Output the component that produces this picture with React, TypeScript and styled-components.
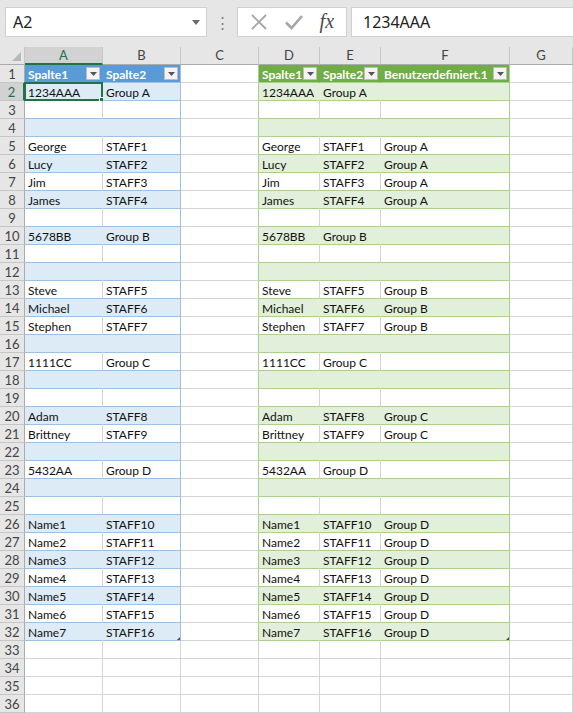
import React from "react";
import styled, { createGlobalStyle, css } from "styled-components";

const GlobalStyle = createGlobalStyle`
  html, body { margin: 0; padding: 0; background: #ffffff; }
  * { box-sizing: border-box; }
`;

const CELL_FONT = `"Lato", "Liberation Sans", sans-serif`;
const UI_FONT = `"Noto Sans", "Open Sans", "Liberation Sans", sans-serif`;

const BLUE = { head: "#5b9bd5", band: "#ddebf7", line: "#9bc2e6" };
const GREEN = { head: "#70ad47", band: "#e2efda", line: "#a9d08e" };
const GRID = "#d4d4d4";
const XL_GREEN = "#217346";

const Frame = styled.div`
  width: 573px;
  height: 713px;
  overflow: hidden;
  background: #e6e6e6;
  display: flex;
  flex-direction: column;
`;

const FormulaBar = styled.div`
  height: 47px;
  display: flex;
  align-items: flex-start;
  padding: 7px 0 0 5px;
  background: #e6e6e6;
`;

const NameBox = styled.div`
  width: 202px;
  height: 30px;
  background: #ffffff;
  border: 1px solid #d0d0d0;
  display: flex;
  align-items: center;
  justify-content: space-between;
  padding: 0 6px 0 7px;
  font-family: ${UI_FONT};
  font-size: 16px;
  color: #222;
`;

const Dots = styled.div`
  width: 30px;
  height: 30px;
  display: flex;
  align-items: center;
  justify-content: center;
  color: #7a7a7a;
  font-family: ${UI_FONT};
  font-size: 15px;
`;

const FxButtons = styled.div`
  width: 110px;
  height: 30px;
  background: #ffffff;
  border: 1px solid #d0d0d0;
  display: flex;
  align-items: center;
  justify-content: space-around;
  padding: 0 4px;
`;

const FxLabel = styled.span`
  font-family: "Liberation Serif", "DejaVu Serif", serif;
  font-style: italic;
  font-size: 20px;
  color: #4a4a4a;
  line-height: 1;
  padding-bottom: 2px;
`;

const FormulaInput = styled.div`
  flex: 1;
  height: 30px;
  margin-left: 4px;
  background: #ffffff;
  border: 1px solid #d0d0d0;
  border-right: none;
  display: flex;
  align-items: center;
  padding-left: 11px;
  font-family: ${UI_FONT};
  font-size: 16px;
  color: #222;
`;

const Sheet = styled.div`
  display: grid;
  grid-template-columns: 25px 78px 78px 78px 61px 61px 129px 63px;
  grid-auto-rows: 18px;
  background: #ffffff;
`;

const ColHead = styled.div<{ $sel?: boolean }>`
  background: ${(p) => (p.$sel ? "#d2d2d2" : "#e6e6e6")};
  border-right: 1px solid #c6c6c6;
  border-bottom: ${(p) => (p.$sel ? `2px solid ${XL_GREEN}` : "1px solid #ababab")};
  color: ${(p) => (p.$sel ? XL_GREEN : "#444")};
  font-family: ${CELL_FONT};
  font-size: 13px;
  display: flex;
  align-items: center;
  justify-content: center;
  line-height: 1;
  padding-top: ${(p) => (p.$sel ? "1px" : "0")};
`;

const Corner = styled.div`
  background: #e6e6e6;
  border-right: 1px solid #c6c6c6;
  border-bottom: 1px solid #ababab;
  display: flex;
  align-items: flex-end;
  justify-content: flex-end;
  padding: 0 3px 3px 0;
`;

const RowHead = styled.div<{ $sel?: boolean }>`
  background: ${(p) => (p.$sel ? "#d2d2d2" : "#e6e6e6")};
  border-right: ${(p) => (p.$sel ? `2px solid ${XL_GREEN}` : "1px solid #ababab")};
  border-bottom: 1px solid #c6c6c6;
  color: ${(p) => (p.$sel ? XL_GREEN : "#444")};
  font-family: ${CELL_FONT};
  font-size: 13px;
  display: flex;
  align-items: center;
  justify-content: center;
  padding-top: 1px;
`;

const Cell = styled.div<{
  $bg: string;
  $br: string;
  $bb: string;
  $head?: boolean;
  $corner?: boolean;
}>`
  position: relative;
  background: ${(p) => p.$bg};
  border-right: 1px solid ${(p) => p.$br};
  border-bottom: 1px solid ${(p) => p.$bb};
  font-family: ${CELL_FONT};
  font-size: 12px;
  color: ${(p) => (p.$head ? "#ffffff" : "#111111")};
  font-weight: ${(p) => (p.$head ? 700 : 400)};
  padding: 0 0 0 3px;
  display: flex;
  align-items: flex-end;
  line-height: 15px;
  white-space: nowrap;
  ${(p) =>
    p.$corner &&
    css`
      &::after {
        content: "";
        position: absolute;
        right: 0;
        bottom: 0;
        width: 0;
        height: 0;
        border-left: 3px solid transparent;
        border-bottom: 3px solid #4a4a4a;
      }
    `}
`;

const FilterButton = styled.span`
  position: absolute;
  right: 2px;
  top: 2px;
  width: 14px;
  height: 13px;
  background: #f3f3f3;
  border: 1px solid #bdbdbd;
  display: flex;
  align-items: center;
  justify-content: center;
`;

const Selection = styled.div`
  position: absolute;
  left: -1px;
  top: -1px;
  right: -1px;
  bottom: -1px;
  border: 2px solid ${XL_GREEN};
  pointer-events: none;
`;

const FillHandle = styled.div`
  position: absolute;
  right: -4px;
  bottom: -4px;
  width: 6px;
  height: 6px;
  background: ${XL_GREEN};
  border: 1px solid #ffffff;
`;

const Tri = () => (
  <svg width="7" height="4" viewBox="0 0 7 4">
    <polygon points="0,0 7,0 3.5,4" fill="#555" />
  </svg>
);

type Table = typeof BLUE;

const data: ([string, string, string] | null)[] = [
  ["1234AAA", "Group A", ""],
  null,
  null,
  ["George", "STAFF1", "Group A"],
  ["Lucy", "STAFF2", "Group A"],
  ["Jim", "STAFF3", "Group A"],
  ["James", "STAFF4", "Group A"],
  null,
  ["5678BB", "Group B", ""],
  null,
  null,
  ["Steve", "STAFF5", "Group B"],
  ["Michael", "STAFF6", "Group B"],
  ["Stephen", "STAFF7", "Group B"],
  null,
  ["1111CC", "Group C", ""],
  null,
  null,
  ["Adam", "STAFF8", "Group C"],
  ["Brittney", "STAFF9", "Group C"],
  null,
  ["5432AA", "Group D", ""],
  null,
  null,
  ["Name1", "STAFF10", "Group D"],
  ["Name2", "STAFF11", "Group D"],
  ["Name3", "STAFF12", "Group D"],
  ["Name4", "STAFF13", "Group D"],
  ["Name5", "STAFF14", "Group D"],
  ["Name6", "STAFF15", "Group D"],
  ["Name7", "STAFF16", "Group D"],
];
const leftRows = data.map((d) => (d ? [d[0], d[1]] : ["", ""]));
const rightRows = data.map((d) => (d ? [d[0], d[1], d[2]] : ["", "", ""]));

const COLS = ["A", "B", "C", "D", "E", "F", "G"];
const TOTAL_ROWS = 36;
const LAST_TABLE_ROW = 32;

function tableCell(
  key: string,
  t: Table,
  row: number,
  text: string,
  isLast: boolean,
  selected = false
) {
  const head = row === 1;
  const band = row % 2 === 0;
  const bg = head ? t.head : band ? t.band : "#ffffff";
  const br = isLast ? t.line : head ? t.head : band ? t.band : GRID;
  const corner = isLast && row === LAST_TABLE_ROW;
  return (
    <Cell key={key} $bg={bg} $br={br} $bb={t.line} $head={head} $corner={corner}>
      {text}
      {head && (
        <FilterButton>
          <Tri />
        </FilterButton>
      )}
      {selected && (
        <Selection>
          <FillHandle />
        </Selection>
      )}
    </Cell>
  );
}

function plainCell(key: string, leftOfGreen: boolean, row: number) {
  const br = leftOfGreen && row <= LAST_TABLE_ROW ? GREEN.line : GRID;
  return <Cell key={key} $bg="#ffffff" $br={br} $bb={GRID} />;
}

export default function App() {
  const cells: React.ReactNode[] = [];
  cells.push(
    <Corner key="corner">
      <svg width="9" height="9" viewBox="0 0 9 9">
        <polygon points="9,0 9,9 0,9" fill="#b8b8b8" />
      </svg>
    </Corner>
  );
  COLS.forEach((c) =>
    cells.push(
      <ColHead key={"h" + c} $sel={c === "A"}>
        {c}
      </ColHead>
    )
  );

  for (let r = 1; r <= TOTAL_ROWS; r++) {
    cells.push(
      <RowHead key={"r" + r} $sel={r === 2}>
        {r}
      </RowHead>
    );
    if (r <= LAST_TABLE_ROW) {
      const l = r === 1 ? ["Spalte1", "Spalte2"] : leftRows[r - 2];
      const rt = r === 1 ? ["Spalte1", "Spalte2", "Benutzerdefiniert.1"] : rightRows[r - 2];
      cells.push(tableCell(`a${r}`, BLUE, r, l[0], false, r === 2));
      cells.push(tableCell(`b${r}`, BLUE, r, l[1], true));
      cells.push(plainCell(`c${r}`, true, r));
      cells.push(tableCell(`d${r}`, GREEN, r, rt[0], false));
      cells.push(tableCell(`e${r}`, GREEN, r, rt[1], false));
      cells.push(tableCell(`f${r}`, GREEN, r, rt[2], true));
      cells.push(plainCell(`g${r}`, false, r));
    } else {
      ["a", "b", "c", "d", "e", "f", "g"].forEach((c) => cells.push(plainCell(`${c}${r}`, false, r)));
    }
  }

  return (
    <Frame>
      <GlobalStyle />
      <FormulaBar>
        <NameBox>
          <span>A2</span>
          <svg width="8" height="5" viewBox="0 0 8 5">
            <polygon points="0,0 8,0 4,5" fill="#6a6a6a" />
          </svg>
        </NameBox>
        <Dots>⋮</Dots>
        <FxButtons>
          <svg width="18" height="18" viewBox="0 0 18 18">
            <path d="M2 2 L16 16 M16 2 L2 16" stroke="#a6a6a6" strokeWidth="1.8" fill="none" />
          </svg>
          <svg width="20" height="18" viewBox="0 0 20 18">
            <path d="M2 9.5 L7.5 15 L18 3" stroke="#a6a6a6" strokeWidth="2.6" fill="none" />
          </svg>
          <FxLabel>fx</FxLabel>
        </FxButtons>
        <FormulaInput>1234AAA</FormulaInput>
      </FormulaBar>
      <Sheet>{cells}</Sheet>
    </Frame>
  );
}
